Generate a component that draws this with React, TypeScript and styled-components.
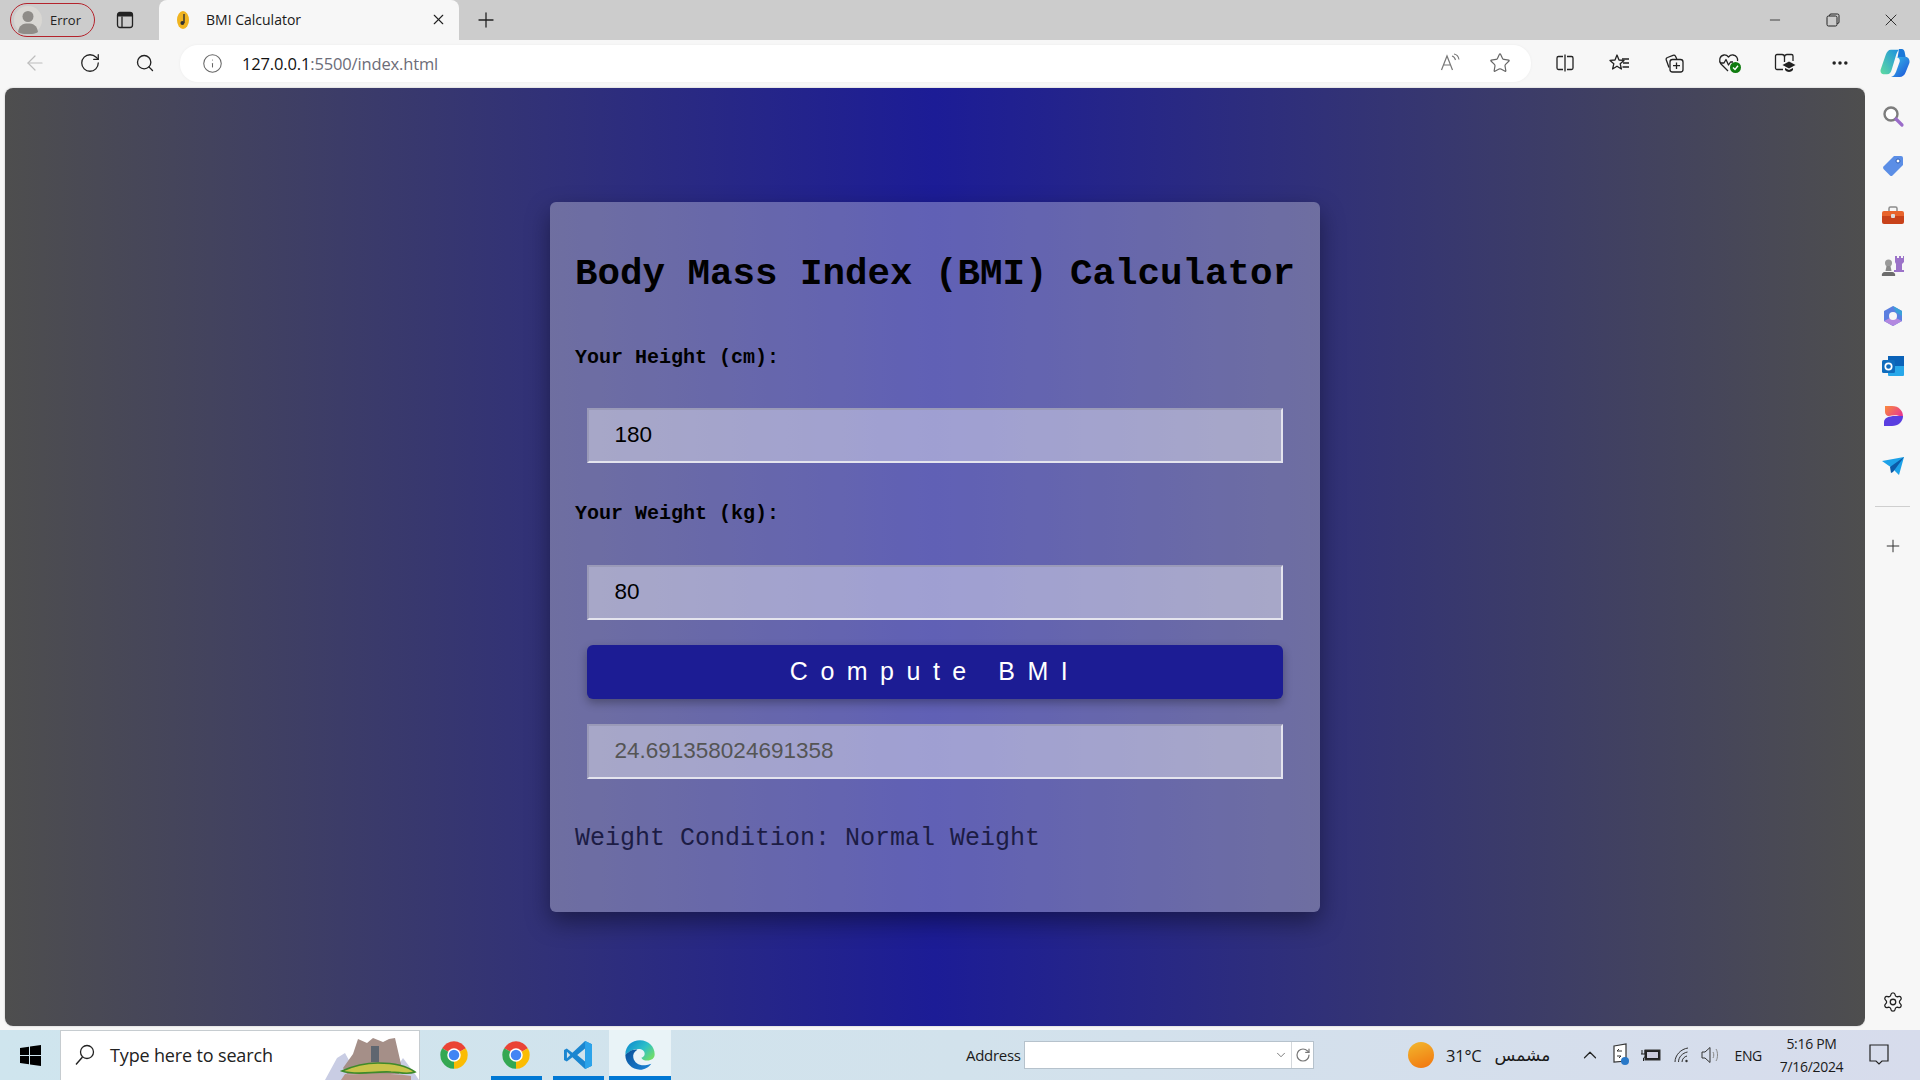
import styled, { createGlobalStyle } from 'styled-components';
import { X, Plus, ArrowLeft, RotateCw, Search, Info, Star, Minus, Settings, ChevronUp, ChevronDown, Ellipsis } from 'lucide-react';

const GlobalStyle = createGlobalStyle`
  * { box-sizing: border-box; }
  html, body { margin: 0; padding: 0; height: 100%; overflow: hidden; }
  body { font-family: "Open Sans", "Noto Sans", "DejaVu Sans", sans-serif; color: #111; }
`;

const Desktop = styled.div`
  width: 1920px;
  height: 1080px;
  display: flex;
  flex-direction: column;
  background: #f7f7f7;
`;

//Tab strip
const TabStrip = styled.div`
  height: 40px;
  flex: none;
  display: flex;
  background: #cccccc;
  padding-left: 10px;
  align-items: flex-start;
`;

const Profile = styled.div`
  width: 85px;
  height: 34px;
  margin-top: 3px;
  border: 1.5px solid #b4232c;
  border-radius: 17px;
  display: flex;
  align-items: center;
  padding-left: 3px;
  font-size: 13px;
  gap: 8px;
  color: #222;
`;

const Slot40 = styled.div`
  width: 40px;
  height: 40px;
  display: flex;
  align-items: center;
  justify-content: center;
  flex: none;
`;

const TabsButton = styled(Slot40)`
  margin-left: 10px;
  margin-right: 14px;
`;

const Tab = styled.div`
  width: 300px;
  height: 40px;
  background: #f7f7f7;
  border-radius: 8px 8px 0 0;
  display: flex;
  align-items: center;
  padding: 0 12px 1px 16px;
  font-size: 14px;
  color: #1a1a1a;
`;

const TabTitle = styled.span`
  margin-left: 15px;
  flex: 1;
`;

const NewTab = styled(Slot40)`
  margin-left: 7px;
`;

const WindowControls = styled.div`
  margin-left: auto;
  display: flex;
`;

const WindowButton = styled.div`
  width: 58px;
  height: 40px;
  display: flex;
  align-items: center;
  justify-content: center;
`;

//Toolbar
const Toolbar = styled.div`
  height: 48px;
  flex: none;
  display: flex;
  align-items: center;
  padding: 0 0 2px 7px;
  background: #f7f7f7;
`;

const ToolSlot = styled.div`
  width: 55px;
  height: 40px;
  flex: none;
  display: flex;
  align-items: center;
  justify-content: center;
`;

const AddressPill = styled.div`
  flex: 1;
  height: 37px;
  margin: 0 6px 0 8px;
  background: #fff;
  border-radius: 18px;
  display: flex;
  align-items: center;
  padding: 0 20px 0 22px;
  box-shadow: 0 0 3px rgba(0, 0, 0, 0.05);
`;

const Url = styled.span`
  margin-left: 19px;
  font-size: 16.5px;
  letter-spacing: -0.15px;
  color: #111;
  flex: 1;

  span {
    color: #6c6c78;
  }
`;

const PillIcons = styled.div`
  display: flex;
  align-items: center;
  gap: 29px;
`;

const ToolGroup = styled.div`
  width: 385px;
  margin-right: -2px;
  flex: none;
  display: flex;
`;

const GroupSlot = styled.div`
  flex: 1;
  height: 40px;
  display: flex;
  align-items: center;
  justify-content: center;
`;

//Middle
const Middle = styled.div`
  flex: 1;
  min-height: 0;
  display: flex;
  padding-left: 5px;
`;

const Viewport = styled.main`
  flex: 1;
  margin-bottom: 4px;
  border-radius: 8px;
  background: linear-gradient(to right, #4e4e4e, #1c1c96, #4e4e4e);
  display: flex;
  align-items: center;
  justify-content: center;
  box-shadow: 0 0 2px rgba(0, 0, 0, 0.25);
`;

const Card = styled.section`
  width: 770px;
  height: 710px;
  padding: 25px;
  border-radius: 6px;
  background: rgba(255, 255, 255, 0.3);
  box-shadow: 0 10px 25px rgba(0, 0, 0, 0.4);
  font-family: "Liberation Mono", "Courier New", monospace;
  color: #000;
`;

const Title = styled.h1`
  margin: 26px 0 0;
  font-size: 37.5px;
  line-height: 42px;
  font-weight: 700;
  white-space: nowrap;
`;

const Label = styled.label<{ $top: number }>`
  display: block;
  margin-top: ${(p) => p.$top}px;
  font-size: 20px;
  line-height: 23px;
  font-weight: 700;
`;

const Field = styled.input<{ $top: number; $muted?: boolean }>`
  display: block;
  width: 696px;
  height: 55px;
  margin: ${(p) => p.$top}px 0 0 12px;
  padding: 0 25.5px 2px;
  border-width: 2px;
  border-style: solid;
  border-color: #9a9ab8 #e4e4ee #e4e4ee #9a9ab8;
  background: rgba(255, 255, 255, 0.4);
  font-family: "Liberation Sans", Arial, sans-serif;
  font-size: 22.5px;
  color: ${(p) => (p.$muted ? '#555' : '#000')};
  outline: none;
`;

const ComputeButton = styled.button`
  display: block;
  width: 696px;
  height: 54px;
  margin: 25px 0 0 12px;
  padding-bottom: 2px;
  border: none;
  border-radius: 6px;
  background: #1c1c94;
  color: #fff;
  font-family: "Liberation Sans", Arial, sans-serif;
  font-size: 25px;
  letter-spacing: 12.5px;
  box-shadow: 0 4px 10px rgba(0, 0, 0, 0.3);
`;

const Condition = styled.p`
  margin: 45px 0 0;
  font-size: 25px;
  line-height: 29px;
  color: #1c1c44;
`;

//Edge sidebar
const Sidebar = styled.aside`
  width: 55px;
  flex: none;
  display: flex;
  flex-direction: column;
  align-items: center;
  padding: 3px 0 3px;
  background: #f7f7f7;
`;

const SideSlot = styled.div`
  width: 54px;
  height: 50px;
  flex: none;
  display: flex;
  align-items: center;
  justify-content: center;
`;

const SideRule = styled.div`
  width: 35px;
  height: 1px;
  margin: 15px 0 14px;
  background: #cfcfcf;
`;

const SideBottom = styled(SideSlot)`
  margin-top: auto;
`;

//Taskbar
const Taskbar = styled.footer`
  height: 50px;
  flex: none;
  display: flex;
  align-items: center;
  background: linear-gradient(to right, #cfe5ee, #d2e2ec 50%, #d7dcec);
  font-size: 15px;
  color: #1a1a1a;
`;

const StartButton = styled.div`
  width: 60px;
  height: 50px;
  display: flex;
  align-items: center;
  justify-content: center;
`;

const SearchBox = styled.div`
  width: 360px;
  height: 50px;
  flex: none;
  background: #fff;
  border: 1px solid #c6ccd0;
  border-bottom: none;
  display: flex;
  align-items: center;
  padding: 0 0 2px 13px;
  font-size: 18px;
  color: #222;
  overflow: hidden;
  position: relative;
`;

const SearchText = styled.span`
  margin-left: 14px;
  letter-spacing: -0.15px;
`;

const Highlight = styled.div`
  position: absolute;
  right: 0;
  bottom: 0;
  line-height: 0;
`;

const AppCell = styled.div<{ $state?: 'running' | 'active' }>`
  width: 62px;
  height: 50px;
  flex: none;
  display: flex;
  align-items: center;
  justify-content: center;
  position: relative;
  background: ${(p) => (p.$state === 'active' ? '#e9f3f7' : 'transparent')};

  &::after {
    content: '';
    display: ${(p) => (p.$state ? 'block' : 'none')};
    position: absolute;
    bottom: 0;
    height: 4px;
    background: #0078d4;
    left: ${(p) => (p.$state === 'active' ? '0' : '6px')};
    right: ${(p) => (p.$state === 'active' ? '0' : '5px')};
  }
`;

const Apps = styled.div`
  display: flex;
  margin-left: 3px;
`;

const AddressLabel = styled.span`
  margin-left: 295px;
  font-size: 15px;
  letter-spacing: -0.3px;
  width: 58px;
`;

const AddressBox = styled.div`
  width: 290px;
  height: 28px;
  display: flex;
  align-items: center;
  background: #fff;
  border: 1px solid #b6c2cc;
`;

const AddressInput = styled.div`
  flex: 1;
  height: 100%;
  display: flex;
  align-items: center;
  justify-content: flex-end;
  padding-right: 3px;
  border-right: 1px solid #d4d8dc;
`;

const AddressGo = styled.div`
  width: 21px;
  display: flex;
  align-items: center;
  justify-content: center;
`;

const Weather = styled.div`
  display: flex;
  align-items: center;
  margin-left: 94px;
  width: 150px;
`;

const Sun = styled.div`
  width: 26px;
  height: 26px;
  border-radius: 50%;
  background: linear-gradient(160deg, #f2b82e, #f2740e);
`;

const Temp = styled.span`
  margin-left: 12px;
  font-size: 16.5px;
  letter-spacing: -0.2px;
`;

const Arabic = styled.span`
  margin-left: 13px;
  font-family: "DejaVu Sans", sans-serif;
  font-size: 17px;
`;

const Tray = styled.div`
  display: flex;
  align-items: center;
  margin-left: 17px;
`;

const TrayIcon = styled.div`
  width: 30.5px;
  display: flex;
  justify-content: center;
`;

const Lang = styled.span`
  margin-left: 7px;
  font-size: 14px;
  letter-spacing: -0.4px;
  width: 32px;
`;

const Clock = styled.div`
  width: 90px;
  text-align: center;
  font-size: 14px;
  line-height: 23px;
  letter-spacing: -0.3px;
`;

const Notification = styled.div`
  margin-left: 11px;
  line-height: 0;
`;

function Chrome() {
  return (
    <svg width='30' height='30' viewBox='0 0 24 24'>
      <path d='M12 12L2.5 6.5A11 11 0 0 1 21.5 6.5Z' fill='#ea4335' />
      <path d='M12 12L21.5 6.5A11 11 0 0 1 12 23Z' fill='#fbbc04' />
      <path d='M12 12L12 23A11 11 0 0 1 2.5 6.5Z' fill='#34a853' />
      <circle cx='12' cy='12' r='5.4' fill='#fff' />
      <circle cx='12' cy='12' r='4.2' fill='#4285f4' />
    </svg>
  );
}

function VsCode() {
  return (
    <svg width='32' height='32' viewBox='0 0 24 24'>
      <path d='M17.3 1.5L22.5 4V20L17.3 22.5L7.8 13.6L3.6 16.8L1.5 15.7V8.3L3.6 7.2L7.8 10.4ZM17.3 7.2L11.4 12L17.3 16.8ZM3.7 9.6V14.4L6.2 12Z' fill='#1b86d0' fillRule='evenodd' />
      <path d='M17.3 1.5L22.5 4V20L17.3 22.5Z' fill='#2ca3ea' />
    </svg>
  );
}

function Edge() {
  return (
    <svg width='32' height='32' viewBox='0 0 24 24'>
      <defs>
        <linearGradient id='edgeTop' x1='0.1' y1='0.1' x2='1' y2='0.7'>
          <stop offset='0' stopColor='#0f8fd0' />
          <stop offset='0.55' stopColor='#2cc0c8' />
          <stop offset='1' stopColor='#6fdc6c' />
        </linearGradient>
        <linearGradient id='edgeLow' x1='0' y1='0' x2='1' y2='1'>
          <stop offset='0' stopColor='#0a4f98' />
          <stop offset='1' stopColor='#1a86d8' />
        </linearGradient>
      </defs>
      <path d='M1 12C1 5 6 1 12 1C18.5 1 23 6 23 11.5C23 14.5 20.5 16.2 17.5 16.2C15.5 16.2 13.5 15.5 13 14C14.5 13.5 15.5 12.5 15.5 11C15.5 9 13.5 7.5 11 7.5C6 7.5 3 10 1 12Z' fill='url(#edgeTop)' />
      <path d='M1 12C3 10 6 7.5 10 8C7.5 9.5 6.5 11.5 7 14C7.8 18 12 20.5 17 19.5C18.5 19.2 20 18.5 20.5 18.5C18.5 21.2 15.5 23 12 23C6 23 1 18 1 12Z' fill='url(#edgeLow)' />
    </svg>
  );
}

function Copilot() {
  return (
    <svg width='32' height='32' viewBox='0 0 24 24'>
      <defs>
        <linearGradient id='copA' x1='0' y1='1' x2='1' y2='0'>
          <stop offset='0' stopColor='#5fdca0' />
          <stop offset='1' stopColor='#1c8fe0' />
        </linearGradient>
        <linearGradient id='copB' x1='0' y1='0' x2='1' y2='1'>
          <stop offset='0' stopColor='#36c0e8' />
          <stop offset='1' stopColor='#1d4fd8' />
        </linearGradient>
      </defs>
      <path d='M9 2H15C14 3 13.5 4 13 5.5L9.5 17C9 19 8 20.5 6 20.5H4C2 20.5 0.8 19 1.2 17L5 6C6 3.5 7 2 9 2Z' fill='url(#copA)' />
      <path d='M13 7.5H20C22 7.5 23.3 9.5 22.8 12L20 19C19 21.5 17.5 22.5 15.5 22.5H9C11 22 12 20.5 12.8 18.5L15.5 11C16 9.5 15 8 13 7.5Z' fill='url(#copB)' />
      <path d='M15 1.5H17C18.5 1.5 19.3 3 19.5 5L20 7.5H14Z' fill='#1a78d8' />
    </svg>
  );
}

function Favicon() {
  return (
    <svg width='16' height='20' viewBox='0 0 16 20'>
      <ellipse cx='8' cy='10' rx='6' ry='9' fill='#f0b420' />
      <path d='M9 4V13' stroke='#333' strokeWidth='1.4' />
      <circle cx='7.4' cy='13' r='2' fill='#333' />
    </svg>
  );
}

function Avatar() {
  return (
    <svg width='28' height='28' viewBox='0 0 28 28'>
      <circle cx='14' cy='14' r='14' fill='#d9d7d3' />
      <circle cx='14' cy='10.5' r='5.5' fill='#8f8c88' />
      <path d='M4 26C5 19 9 17.5 14 17.5C19 17.5 23 19 24 26C20 29 8 29 4 26Z' fill='#8f8c88' />
    </svg>
  );
}

const stroke = { fill: 'none', stroke: '#222', strokeWidth: 1.3, strokeLinejoin: 'round' as const };

function App() {
  return (
    <Desktop>
      <GlobalStyle />
      <TabStrip>
        <Profile>
          <Avatar />
          Error
        </Profile>
        <TabsButton>
          <svg width='20' height='20' viewBox='0 0 20 20'>
            <rect x='2.5' y='2.5' width='15' height='15' rx='2.5' {...stroke} />
            <path d='M2.5 5V5A2.5 2.5 0 0 1 5 2.5H15A2.5 2.5 0 0 1 17.5 5V6.5H2.5Z' fill='#222' />
            <path d='M7 6.5V17.5' {...stroke} />
          </svg>
        </TabsButton>
        <Tab>
          <Favicon />
          <TabTitle>BMI Calculator</TabTitle>
          <X size={17} color='#222' strokeWidth={1.6} />
        </Tab>
        <NewTab>
          <Plus size={24} color='#222' strokeWidth={1.3} />
        </NewTab>
        <WindowControls>
          <WindowButton>
            <Minus size={16} color='#222' strokeWidth={1.2} />
          </WindowButton>
          <WindowButton>
            <svg width='14' height='14' viewBox='0 0 14 14'>
              <rect x='1' y='3' width='10' height='10' rx='1.5' {...stroke} strokeWidth={1} />
              <path d='M3.5 3V2.5A1.5 1.5 0 0 1 5 1H11.5A1.5 1.5 0 0 1 13 2.5V9A1.5 1.5 0 0 1 11.5 10.5H11' {...stroke} strokeWidth={1} />
            </svg>
          </WindowButton>
          <WindowButton>
            <X size={20} color='#222' strokeWidth={1.1} />
          </WindowButton>
        </WindowControls>
      </TabStrip>

      <Toolbar>
        <ToolSlot>
          <ArrowLeft size={24} color='#bdbdbd' strokeWidth={1.2} />
        </ToolSlot>
        <ToolSlot>
          <RotateCw size={22} color='#222' strokeWidth={1.4} />
        </ToolSlot>
        <ToolSlot>
          <Search size={20} color='#222' strokeWidth={1.6} />
        </ToolSlot>
        <AddressPill>
          <Info size={21} color='#666' strokeWidth={1.2} />
          <Url>
            127.0.0.1<span>:5500/index.html</span>
          </Url>
          <PillIcons>
            <svg width='20' height='20' viewBox='0 0 20 20'>
              <path d='M1.5 17L7 3L12.5 17M3.5 12H10.5' fill='none' stroke='#777' strokeWidth='1.2' />
              <path d='M12 3C14 3.5 15 5 15.5 7M14 1C17 1.5 18.5 4 19 6.5' fill='none' stroke='#777' strokeWidth='1.1' />
            </svg>
            <Star size={22} color='#666' strokeWidth={1.3} />
          </PillIcons>
        </AddressPill>
        <ToolGroup>
          <GroupSlot>
            <svg width='20' height='20' viewBox='0 0 20 20'>
              <path d='M8 3.5H3.5A1.5 1.5 0 0 0 2 5V15A1.5 1.5 0 0 0 3.5 16.5H8M12 3.5H16.5A1.5 1.5 0 0 1 18 5V15A1.5 1.5 0 0 1 16.5 16.5H12M10 1.5V18.5' {...stroke} />
            </svg>
          </GroupSlot>
          <GroupSlot>
            <svg width='21' height='21' viewBox='0 0 21 21'>
              <path d='M8 2L10 7L15 7.4L11.2 10.8L12.4 16L8 13.2L3.6 16L4.8 10.8L1 7.4L6 7Z' {...stroke} />
              <path d='M13 6H20M14 10H20M13.5 14H20' {...stroke} />
            </svg>
          </GroupSlot>
          <GroupSlot>
            <svg width='21' height='21' viewBox='0 0 21 21'>
              <path d='M5 14.5L2.3 7A2 2 0 0 1 3.5 4.5L9 2.3A2 2 0 0 1 11.5 3.2L12.8 6' {...stroke} />
              <rect x='6' y='6.5' width='13' height='12.5' rx='2.5' {...stroke} />
              <path d='M12.5 9.5V16M9 12.7H16' {...stroke} />
            </svg>
          </GroupSlot>
          <GroupSlot>
            <svg width='24' height='22' viewBox='0 0 24 22'>
              <path d='M10 19L3 12C0.5 9 1.5 3.5 6 3C8 2.8 9.5 3.8 10.5 5C11.5 3.8 13 2.8 15 3C18.5 3.3 20 6.5 19.5 9' {...stroke} />
              <path d='M2 11H6L8 7.5L10.5 13L12.5 10H15' {...stroke} />
              <circle cx='17.5' cy='15.5' r='5.5' fill='#107c10' />
              <path d='M15 15.5L17 17.5L20 13.8' fill='none' stroke='#fff' strokeWidth='1.4' />
            </svg>
          </GroupSlot>
          <GroupSlot>
            <svg width='22' height='20' viewBox='0 0 22 20'>
              <path d='M9 16.5H3A1.5 1.5 0 0 1 1.5 15V3A1.5 1.5 0 0 1 3 1.5H8C9.5 1.5 10.5 2.5 10.5 4V9M10.5 4C10.5 2.5 11.5 1.5 13 1.5H17.5A1.5 1.5 0 0 1 19 3V8' {...stroke} />
              <path d='M15 8.5L21.5 12L15 15.5L8.5 12Z' fill='#222' />
              <path d='M11 15V17C13 19.5 17 19.5 19 17V15L15 17Z' fill='#222' />
            </svg>
          </GroupSlot>
          <GroupSlot>
            <Ellipsis size={20} color='#222' strokeWidth={2.2} />
          </GroupSlot>
          <GroupSlot>
            <Copilot />
          </GroupSlot>
        </ToolGroup>
      </Toolbar>

      <Middle>
        <Viewport>
          <Card>
            <Title>Body Mass Index (BMI) Calculator</Title>
            <Label $top={50.5}>Your Height (cm):</Label>
            <Field $top={39.5} value='180' readOnly />
            <Label $top={38.5}>Your Weight (kg):</Label>
            <Field $top={40.5} value='80' readOnly />
            <ComputeButton>Compute BMI</ComputeButton>
            <Field $top={25} $muted value='24.691358024691358' readOnly />
            <Condition>Weight Condition: Normal Weight</Condition>
          </Card>
        </Viewport>
        <Sidebar>
          <SideSlot>
            <svg width='24' height='24' viewBox='0 0 24 24'>
              <circle cx='10' cy='10' r='6.5' fill='#fff' stroke='#7d7d7d' strokeWidth='2.4' />
              <path d='M15 15L21 21' stroke='#9a6cc9' strokeWidth='3.2' strokeLinecap='round' />
            </svg>
          </SideSlot>
          <SideSlot>
            <svg width='24' height='24' viewBox='0 0 24 24'>
              <path d='M13 2H20A2 2 0 0 1 22 4V11L11.5 21.5A2 2 0 0 1 9 21.5L2.5 15A2 2 0 0 1 2.5 12.5Z' fill='#5b8ee6' />
              <circle cx='17' cy='7' r='2' fill='#fff' stroke='#2f5fb8' />
            </svg>
          </SideSlot>
          <SideSlot>
            <svg width='24' height='24' viewBox='0 0 24 24'>
              <path d='M8 7V4.5A1.5 1.5 0 0 1 9.5 3H14.5A1.5 1.5 0 0 1 16 4.5V7' fill='none' stroke='#8c8c8c' strokeWidth='1.5' />
              <path d='M1 9A2 2 0 0 1 3 7H21A2 2 0 0 1 23 9V12H1Z' fill='#e8642c' />
              <path d='M1 12H23V18A2 2 0 0 1 21 20H3A2 2 0 0 1 1 18Z' fill='#c8421a' />
              <rect x='10' y='10' width='4' height='4' rx='1' fill='#ddd' />
            </svg>
          </SideSlot>
          <SideSlot>
            <svg width='24' height='24' viewBox='0 0 24 24'>
              <path d='M14 2H16V4H18V2H20V4H22V2H23V8L21 10V16H23V18H13V16H15V10L14 8Z' fill='#9b72c8' />
              <circle cx='7.5' cy='9' r='3.5' fill='#9a9a9a' />
              <path d='M5.5 12H9.5L10.5 17H4.5Z' fill='#8a8a8a' />
              <path d='M1 22A3 3 0 0 1 4 18H11A3 3 0 0 1 14 22Z' fill='#6c6c6c' />
            </svg>
          </SideSlot>
          <SideSlot>
            <svg width='24' height='24' viewBox='0 0 24 24'>
              <path d='M12 2L21 7V17L12 22L3 17V7Z' fill='#5b7fe0' />
              <path d='M12 2L21 7V12L15 8.5Z' fill='#3aa0d8' />
              <path d='M3 17L12 22L21 17L15 14H9Z' fill='#b388e0' />
              <circle cx='12' cy='12' r='4' fill='#f7f7f7' />
            </svg>
          </SideSlot>
          <SideSlot>
            <svg width='24' height='24' viewBox='0 0 24 24'>
              <rect x='7' y='2' width='16' height='10' fill='#0a62b8' />
              <path d='M7 12H23V21A1 1 0 0 1 22 22H8A1 1 0 0 1 7 21Z' fill='#28a8ea' />
              <rect x='1' y='6' width='13' height='13' rx='1.5' fill='#0f6cbd' />
              <circle cx='7.5' cy='12.5' r='3.2' fill='none' stroke='#fff' strokeWidth='1.7' />
            </svg>
          </SideSlot>
          <SideSlot>
            <svg width='24' height='24' viewBox='0 0 24 24'>
              <defs>
                <linearGradient id='drop' x1='0' y1='0' x2='1' y2='0.6'>
                  <stop offset='0' stopColor='#fb8a3c' />
                  <stop offset='1' stopColor='#e63c8c' />
                </linearGradient>
              </defs>
              <path d='M4 2H11C18 2 22 7 22 12C22 13 21 14 20 13C18 11 12 11 8 12C6 12.5 4 10 4 8Z' fill='url(#drop)' />
              <path d='M3 22V18C3 14 8 12 14 12H22C22 18 17 22 11 22Z' fill='#5a3ee0' />
            </svg>
          </SideSlot>
          <SideSlot>
            <svg width='24' height='24' viewBox='0 0 24 24'>
              <path d='M1 7L23 3L18 21L11 14Z' fill='#1da1e8' />
              <path d='M9 13L23 3L12 18L10 19Z' fill='#0c5aa8' />
            </svg>
          </SideSlot>
          <SideRule />
          <SideSlot>
            <Plus size={20} color='#333' strokeWidth={1.2} />
          </SideSlot>
          <SideBottom>
            <Settings size={22} color='#222' strokeWidth={1.4} />
          </SideBottom>
        </Sidebar>
      </Middle>

      <Taskbar>
        <StartButton>
          <svg width='21' height='21' viewBox='0 0 21 21'>
            <path d='M0 3L9 1.7V10H0ZM10 1.5L21 0V10H10ZM0 11H9V19.3L0 18ZM10 11H21V21L10 19.5Z' fill='#000' />
          </svg>
        </StartButton>
        <SearchBox>
          <svg width='22' height='24' viewBox='0 0 22 24'>
            <circle cx='13' cy='9' r='6.5' fill='none' stroke='#222' strokeWidth='1.3' />
            <path d='M8.5 14L2 21.5' stroke='#222' strokeWidth='1.4' />
          </svg>
          <SearchText>Type here to search</SearchText>
          <Highlight>
            <svg width='96' height='46' viewBox='0 0 96 46'>
              <path d='M2 46L14 24L22 19L28 30H76L80 24L92 40L96 46Z' fill='#c9cde4' />
              <path d='M20 34L30 20L35 5L44 9L50 4L60 8L66 5L72 4L78 30L76 40H24Z' fill='#a58f88' />
              <path d='M48 12H56V28H48Z' fill='#5f6670' />
              <path d='M19 37C30 32 40 29 55 29C70 29 84 32 92 38C84 41 76 38 68 38C50 37 34 42 19 37Z' fill='#c8c44a' stroke='#3f8a2a' strokeWidth='1.6' />
              <path d='M22 40C40 41 60 38 88 42V46H18Z' fill='#b8958c' />
            </svg>
          </Highlight>
        </SearchBox>
        <Apps>
          <AppCell>
            <Chrome />
          </AppCell>
          <AppCell $state='running'>
            <Chrome />
          </AppCell>
          <AppCell $state='running'>
            <VsCode />
          </AppCell>
          <AppCell $state='active'>
            <Edge />
          </AppCell>
        </Apps>
        <AddressLabel>Address</AddressLabel>
        <AddressBox>
          <AddressInput>
            <ChevronDown size={14} color='#555' strokeWidth={1.3} />
          </AddressInput>
          <AddressGo>
            <RotateCw size={16} color='#777' strokeWidth={1.8} />
          </AddressGo>
        </AddressBox>
        <Weather>
          <Sun />
          <Temp>31°C</Temp>
          <Arabic>مشمس</Arabic>
        </Weather>
        <Tray>
          <TrayIcon>
            <ChevronUp size={22} color='#222' strokeWidth={1.3} />
          </TrayIcon>
          <TrayIcon>
            <svg width='20' height='24' viewBox='0 0 20 24'>
              <path d='M3 3L15 1V18L3 19Z' fill='#fff' stroke='#333' strokeWidth='1.2' />
              <path d='M6 8H11M6 8L8 6M10 13H6M10 13L8 15' stroke='#333' fill='none' />
              <circle cx='14' cy='18' r='4' fill='#2878c8' />
            </svg>
          </TrayIcon>
          <TrayIcon>
            <svg width='22' height='16' viewBox='0 0 22 16'>
              <rect x='5' y='3' width='15' height='10' fill='#222' stroke='#333' />
              <rect x='7' y='5' width='11' height='6' fill='#ccd' />
              <path d='M2 3V7M5 3V7M1 7H6V9L3.5 11V14' stroke='#222' fill='none' />
            </svg>
          </TrayIcon>
          <TrayIcon>
            <svg width='18' height='18' viewBox='0 0 18 18'>
              <path d='M2 16C2 9 8 3 15 2M5.5 16C5.5 11 9.5 7 14.5 6M9 16C9 13 11.5 10.5 14 10' fill='none' stroke='#333' strokeWidth='1' />
              <circle cx='13.5' cy='15' r='1.2' fill='#333' />
            </svg>
          </TrayIcon>
          <TrayIcon>
            <svg width='22' height='20' viewBox='0 0 22 20'>
              <path d='M1 7H4L9 2.5V17.5L4 13H1Z' fill='none' stroke='#333' />
              <path d='M12 7C13 8.5 13 11.5 12 13M15 4C17 7 17 13 15 16' fill='none' stroke='#888' />
            </svg>
          </TrayIcon>
          <Lang>ENG</Lang>
          <Clock>
            5:16 PM
            <br />
            7/16/2024
          </Clock>
          <Notification>
            <svg width='22' height='24' viewBox='0 0 22 24'>
              <path d='M2 2H20V18H14L11 21L8 18H2Z' fill='none' stroke='#222' strokeWidth='1.2' />
            </svg>
          </Notification>
        </Tray>
      </Taskbar>
    </Desktop>
  );
}

export default App;
